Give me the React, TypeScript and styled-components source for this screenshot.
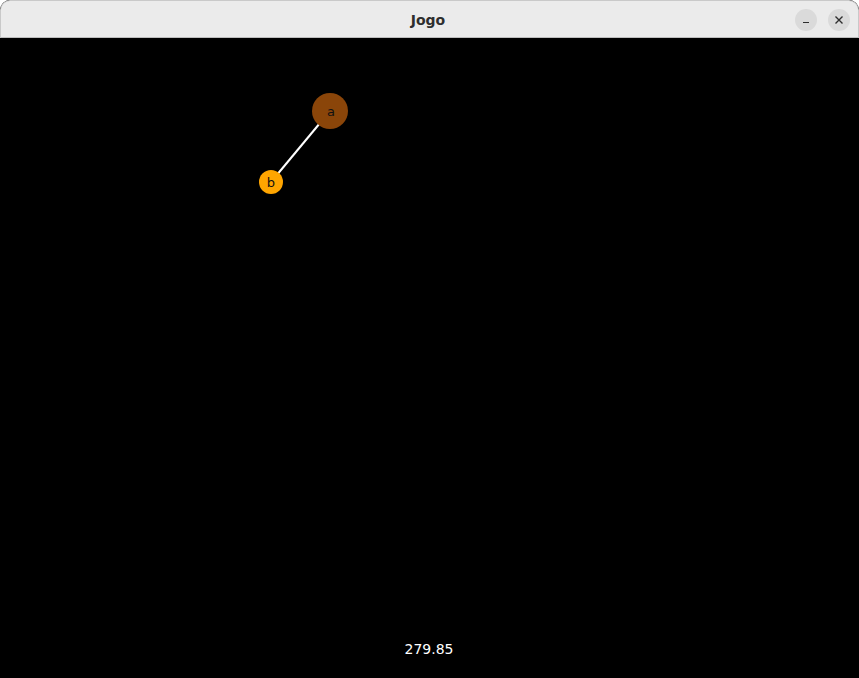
import React from "react";
import styled, { createGlobalStyle } from "styled-components";

const Global = createGlobalStyle`
  html, body { margin: 0; padding: 0; background: #ffffff; }
  body { font-family: "DejaVu Sans", "Noto Sans", sans-serif; }
`;

const Window = styled.div`
  width: 859px;
  height: 678px;
  display: flex;
  flex-direction: column;
  overflow: hidden;
  border-radius: 10px 10px 0 0;
  background: #000;
`;

const TitleBar = styled.div`
  flex: none;
  background: #ebebeb;
  border: 1px solid #c9c9c9;
  border-bottom: 1px solid #bdbdbd;
  border-radius: 10px 10px 0 0;
  box-sizing: content-box;
  display: grid;
  grid-template-columns: 1fr auto 1fr;
  align-items: center;
  height: 36px;
`;

const Title = styled.div`
  grid-column: 2;
  font-family: "DejaVu Sans", sans-serif;
  font-weight: bold;
  font-size: 14px;
  color: #2e2e2e;
  padding-top: 1px;
  padding-right: 3px;
`;

const Controls = styled.div`
  grid-column: 3;
  justify-self: end;
  display: flex;
  gap: 11px;
  padding-right: 8px;
  padding-top: 1px;
`;

const WinButton = styled.div`
  width: 22px;
  height: 22px;
  border-radius: 50%;
  background: #dadada;
  display: flex;
  align-items: center;
  justify-content: center;
  color: #2e2e2e;
`;

const Canvas = styled.div`
  position: relative;
  flex: 1;
  background: #000;
  display: flex;
  flex-direction: column;
  justify-content: flex-end;
  align-items: center;
`;

const Graph = styled.svg`
  position: absolute;
  left: 0;
  top: 0;
`;

const Score = styled.div`
  font-family: "DejaVu Sans", sans-serif;
  font-size: 14px;
  color: #ffffff;
  padding-bottom: 21px;
  padding-right: 1px;
`;

export default function App() {
  return (
    <>
      <Global />
      <Window>
        <TitleBar>
          <Title>Jogo</Title>
          <Controls>
            <WinButton>
              <svg width="10" height="10" viewBox="0 0 10 10">
                <line x1="2" y1="7.5" x2="8" y2="7.5" stroke="#2e2e2e" strokeWidth="1.2" />
              </svg>
            </WinButton>
            <WinButton>
              <svg width="10" height="10" viewBox="0 0 10 10">
                <path d="M1.5 1.5 L8.5 8.5 M8.5 1.5 L1.5 8.5" stroke="#2e2e2e" strokeWidth="1.4" />
              </svg>
            </WinButton>
          </Controls>
        </TitleBar>
        <Canvas>
          <Graph width="859" height="640" viewBox="0 0 859 640">
            <line x1="330" y1="73" x2="271" y2="144" stroke="#ffffff" strokeWidth="2" />
            <circle cx="330" cy="73" r="18" fill="#8a4509" />
            <text x="331" y="78" fontSize="13" fontFamily="DejaVu Sans, sans-serif" textAnchor="middle" fill="#111">a</text>
            <circle cx="271" cy="144" r="12" fill="#ffa500" />
            <text x="271" y="149" fontSize="13" fontFamily="DejaVu Sans, sans-serif" textAnchor="middle" fill="#111">b</text>
          </Graph>
          <Score>279.85</Score>
        </Canvas>
      </Window>
    </>
  );
}
